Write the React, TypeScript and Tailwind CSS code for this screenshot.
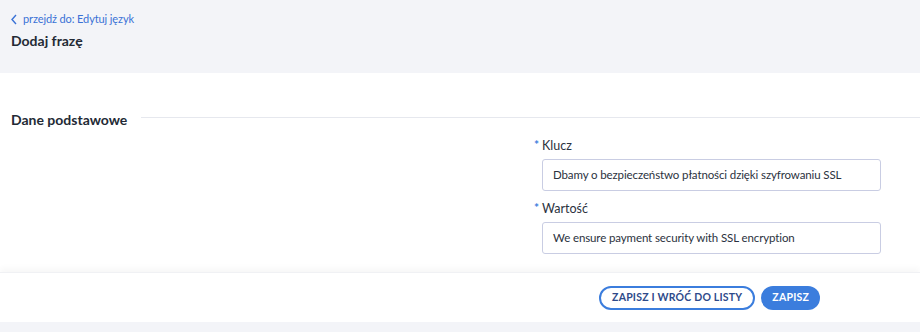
import React from "react";

const font = { fontFamily: "Lato, 'Noto Sans', sans-serif" };

const Field: React.FC<{ label: string; value: string }> = ({ label, value }) => (
  <div className="flex flex-col">
    <label className="flex items-center h-[18px] text-[12.5px] text-[#2b3240]">
      <span className="text-[#3b7ddd] w-[8px] text-[12px] font-bold leading-none pb-[2px]">*</span>
      {label}
    </label>
    <div className="mt-[4px] ml-[8px] h-[32px] w-[339px] border border-[#c9cde3] rounded-[3px] flex items-center px-[10px] text-[11.5px] tracking-[-0.01em] text-[#2b3240] bg-white whitespace-nowrap">
      {value}
    </div>
  </div>
);

export default function App() {
  return (
    <div className="w-[920px] h-[332px] bg-[#f3f4f8] overflow-hidden" style={font}>
      <div className="h-[73px] px-[10px] pt-[10px]">
        <a className="flex items-center gap-[5px] text-[11px] tracking-[-0.01em] text-[#3a72d6] h-[18px]">
          <svg width="8" height="11" viewBox="0 0 8 11" fill="none">
            <path d="M6 1 L2 5.5 L6 10" stroke="#3a72d6" strokeWidth="1.4" />
          </svg>
          przejdź do: Edytuj język
        </a>
        <h1 className="mt-[3px] text-[14px] font-bold text-[#232a35] leading-[20px] pl-[1px]">Dodaj frazę</h1>
      </div>

      <div className="bg-white h-[199px] pt-[36px]">
        <div className="flex items-center px-[11px] h-[20px]">
          <h2 className="text-[14px] font-bold text-[#232a35] whitespace-nowrap">Dane podstawowe</h2>
          <div className="flex-1 h-px bg-[#e6e8ee] ml-[14px] -mr-[11px] -mt-[3px]" />
        </div>
        <div className="grid grid-cols-[534px_1fr] mt-[8px]">
          <div />
          <div className="flex flex-col gap-[9px]">
            <Field label="Klucz" value="Dbamy o bezpieczeństwo płatności dzięki szyfrowaniu SSL" />
            <Field label="Wartość" value="We ensure payment security with SSL encryption" />
          </div>
        </div>
      </div>

      <div className="h-[50px] bg-white shadow-[0_-4px_6px_rgba(0,0,0,0.03)] border-t border-[#f0f1f4] flex items-center justify-end gap-[6px] pr-[100px] pt-[1px]">
        <button className="h-[24px] px-[11px] rounded-full border-2 border-[#3b7ddd] text-[#2e4a8a] text-[10.5px] font-bold tracking-[0.02em] bg-white">
          ZAPISZ I WRÓĆ DO LISTY
        </button>
        <button className="h-[24px] px-[11px] rounded-full bg-[#3b7ddd] text-white text-[10.5px] font-bold tracking-[0.02em]">
          ZAPISZ
        </button>
      </div>
    </div>
  );
}
